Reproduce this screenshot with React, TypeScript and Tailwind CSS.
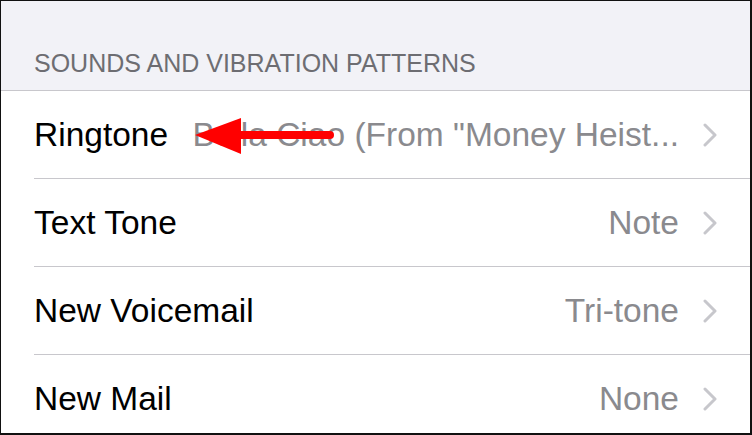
import React from "react";

type Row = { label: string; value: string };

const rows: Row[] = [
  { label: "Ringtone", value: 'Bella Ciao (From "Money Heist...' },
  { label: "Text Tone", value: "Note" },
  { label: "New Voicemail", value: "Tri-tone" },
  { label: "New Mail", value: "None" },
];

function Chevron() {
  return (
    <svg width="14" height="24" viewBox="0 0 14 24" fill="none" className="shrink-0">
      <path d="M2 2 L12 12 L2 22" stroke="#c7c7cc" strokeWidth="3" strokeLinecap="round" strokeLinejoin="round" />
    </svg>
  );
}

function SettingsRow({ row }: { row: Row }) {
  return (
    <div className="flex h-[88px] shrink-0 items-center pl-[33px]">
      <div className="flex h-full flex-1 items-center border-b border-[#c8c7cc] pr-[33px]">
        <span className="shrink-0 text-[33.5px] leading-[40px] text-black">{row.label}</span>
        <span className="ml-6 flex-1 whitespace-nowrap text-right text-[33.5px] leading-[40px] text-[#8a8a8e]">
          {row.value}
        </span>
        <span className="ml-6 flex items-center">
          <Chevron />
        </span>
      </div>
    </div>
  );
}

export default function App() {
  return (
    <div
      className="relative flex h-[435px] w-[752px] flex-col overflow-hidden border-t border-l border-r-2 border-b-2 border-[#111111] bg-white"
      style={{ fontFamily: '"Liberation Sans", Arial, sans-serif' }}
    >
      {/* Section header */}
      <div className="flex h-[90px] shrink-0 items-end border-b border-[#c8c7cc] bg-[#f2f2f7] px-[33px] pb-[12px]">
        <span className="text-[25px] leading-[30px] text-[#6d6d72]">SOUNDS AND VIBRATION PATTERNS</span>
      </div>

      {rows.map((r) => (
        <SettingsRow key={r.label} row={r} />
      ))}

      {/* Annotation arrow */}
      <svg className="pointer-events-none absolute left-0 top-0" width="752" height="435" viewBox="0 0 752 435">
        <line x1="236" y1="134" x2="329" y2="134" stroke="#ff0000" strokeWidth="8" strokeLinecap="round" />
        <polygon points="194,134 240,117 240,153" fill="#ff0000" />
      </svg>
    </div>
  );
}
